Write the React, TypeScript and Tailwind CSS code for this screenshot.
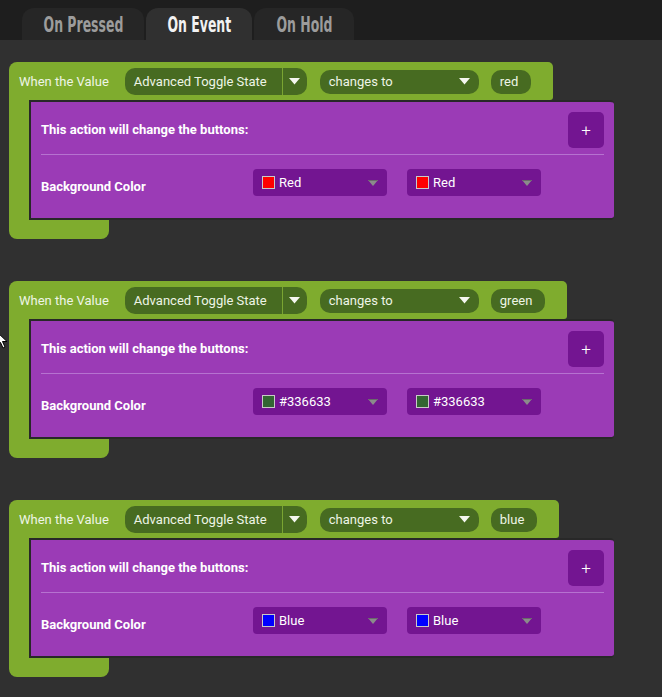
import React from 'react';

interface Rule {
  id: string;
  value: string;
  colorLabel: string;
  swatch: string;
}

const rules: Rule[] = [
  { id: '1', value: 'red', colorLabel: 'Red', swatch: '#ff0000' },
  { id: '2', value: 'green', colorLabel: '#336633', swatch: '#336633' },
  { id: '3', value: 'blue', colorLabel: 'Blue', swatch: '#0000ff' },
];

const tabs = [
  { id: 'pressed', label: 'On Pressed', width: 'w-[122px]' },
  { id: 'event', label: 'On Event', width: 'w-[106px]' },
  { id: 'hold', label: 'On Hold', width: 'w-[100px]' },
];

const WhiteCaret = () => (
  <svg width="11" height="7" viewBox="0 0 11 7">
    <path d="M0 0 H11 L5.5 6.5 Z" fill="#f4f6f0" />
  </svg>
);

const GrayCaret = () => (
  <svg width="10" height="6" viewBox="0 0 10 6">
    <path d="M0 0 H10 L5 6 Z" fill="#8b8b8b" />
    <path d="M0 0 H10 L9.2 1 H0.8 Z" fill="#6a6a6a" />
  </svg>
);

const ColorSelect: React.FC<{ label: string; swatch: string }> = ({ label, swatch }) => (
  <div className="flex h-[27px] w-[134px] items-center rounded-[4px] bg-[#731591] pl-[9px] pr-[9px]">
    <span className="h-[13px] w-[13px] border border-[#c9c9c9]" style={{ backgroundColor: swatch }} />
    <span className="ml-[4px] flex-1 text-[13px] text-white">{label}</span>
    <GrayCaret />
  </div>
);

const RuleBlock: React.FC<{ rule: Rule }> = ({ rule }) => (
  <div className="flex flex-col items-start">
    {/* When the Value header */}
    <div className="flex h-[38px] items-center rounded-tl-[8px] rounded-tr-[5px] rounded-br-[3px] bg-[#7fac2e] pl-[10px] pr-[22px] pt-px text-[13px] text-[#eef5e6]">
      <span>When the Value</span>
      <div className="ml-[16px] flex h-[27px] w-[182px] items-center rounded-[10px] bg-[#476b21]">
        <span className="flex-1 pl-[9px]">Advanced Toggle State</span>
        <span className="h-full w-px bg-[#7aa532]" />
        <span className="flex w-[24px] justify-center">
          <WhiteCaret />
        </span>
      </div>
      <div className="ml-[13px] flex h-[24px] w-[159px] items-center rounded-[10px] bg-[#476b21] pl-[9px] pr-[9px]">
        <span className="flex-1">changes to</span>
        <WhiteCaret />
      </div>
      <div className="ml-[12px] flex h-[24px] items-center rounded-[10px] bg-[#476b21] pl-[9px] pr-[13px]">
        {rule.value}
      </div>
    </div>

    <div className="flex">
      <div className="w-[20px] bg-[#7fac2e]" />
      {/* Action panel */}
      <div className="w-[585px] rounded-r-[4px] border-y-2 border-l-2 border-[#282828] bg-[#9b3bb6] px-[10px] pt-[10px] pb-[22px] text-[13px] text-white">
        <div className="flex h-[36px] items-center justify-between">
          <span className="font-bold">This action will change the buttons:</span>
          <button className="flex h-[36px] w-[36px] items-center justify-center rounded-[5px] bg-[#731591] text-[17px] font-light leading-none text-white">
            +
          </button>
        </div>
        <div className="mt-[6px] h-px bg-[#b672d0]" />
        <div className="mt-[14px] flex items-start">
          <span className="w-[212px] pt-[10px] font-bold leading-[16px]">Background Color</span>
          <ColorSelect label={rule.colorLabel} swatch={rule.swatch} />
          <div className="ml-[20px]">
            <ColorSelect label={rule.colorLabel} swatch={rule.swatch} />
          </div>
        </div>
      </div>
    </div>

    <div className="h-[19px] w-[100px] rounded-b-[8px] bg-[#7fac2e]" />
  </div>
);

const App: React.FC = () => {
  return (
    <div className="relative min-h-screen bg-[#303030] font-['Roboto',sans-serif]">
      {/* Tabs */}
      <div className="flex h-[40px] items-end gap-[2px] bg-[#1e1e1e] pl-[22px]">
        {tabs.map((tab) => (
          <div
            key={tab.id}
            className={`flex h-[32px] ${tab.width} items-center justify-center rounded-t-[12px] pt-[3px] font-['DejaVu_Sans_Condensed',sans-serif] text-[21px] font-bold ${
              tab.id === 'event' ? 'bg-[#303030] text-[#f2f2f2]' : 'bg-[#262626] text-[#9c9c9c]'
            }`}
          >
            <span className="inline-block scale-x-[0.66] whitespace-nowrap">{tab.label}</span>
          </div>
        ))}
      </div>

      {/* Rules */}
      <div className="flex flex-col gap-[42px] pl-[9px] pt-[22px]">
        {rules.map((rule) => (
          <RuleBlock key={rule.id} rule={rule} />
        ))}
      </div>

      {/* mouse cursor */}
      <svg className="absolute left-[-4px] top-[331px]" width="14" height="18" viewBox="0 0 14 18">
        <path d="M1 1 L1 15 L4.5 11.5 L7 17 L9 16 L6.5 10.5 L11 10.5 Z" fill="#ffffff" stroke="#000000" strokeWidth="1" />
      </svg>
    </div>
  );
};

export default App;
